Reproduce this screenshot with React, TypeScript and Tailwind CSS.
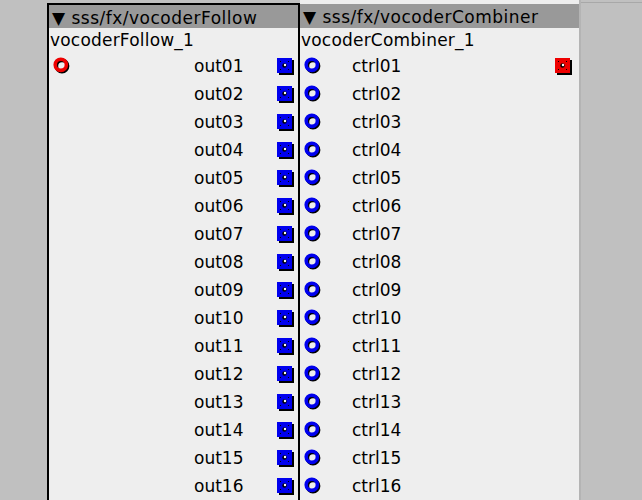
const outs = Array.from({ length: 16 }, (_, i) => String(i + 1).padStart(2, '0'));

function Ring({ color }: { color: string }) {
  return (
    <svg width="18" height="18" viewBox="0 0 18 18">
      <circle cx="9" cy="9" r="5.6" fill="none" stroke="#000" strokeWidth="3.6" />
      <circle cx="7.8" cy="7.8" r="5.6" fill="none" stroke={color} strokeWidth="3.6" />
    </svg>
  );
}

function Port({ color }: { color: string }) {
  return (
    <svg width="17" height="17" viewBox="0 0 17 17">
      <rect x="2" y="2" width="15" height="15" fill="#000" />
      <rect x="0" y="0" width="15" height="15" fill={color} />
      <rect x="3" y="3" width="1" height="1" fill="#000" />
      <rect x="11" y="3" width="1" height="1" fill="#000" />
      <rect x="3" y="11" width="1" height="1" fill="#000" />
      <rect x="11" y="11" width="1" height="1" fill="#000" />
      <circle cx="7.5" cy="7.5" r="2.2" fill="#000" />
      <circle cx="8" cy="7" r="1.2" fill="#fff" />
    </svg>
  );
}

export default function App() {
  return (
    <div
      className="flex w-[642px] h-[500px] overflow-hidden bg-[#c0c0c0] text-black text-[17px]"
      style={{ fontFamily: '"DejaVu Sans", sans-serif' }}
    >
      <div className="w-[47px] shrink-0" />

      {/* vocoderFollow */}
      <div className="w-[253px] shrink-0 mt-[3px] border-x-2 border-t-2 border-black bg-[#eeeeee]">
        <div className="h-[23px] bg-[#999999] flex items-center pl-[3px] pt-[3px] leading-none tracking-[0.5px]">
          ▼ sss/fx/vocoderFollow
        </div>
        <div className="h-[24px] flex items-center pl-px pt-px tracking-[0.2px]">vocoderFollow_1</div>
        {outs.map((n, i) => (
          <div key={n} className="h-[28px] flex items-center">
            <div className="w-[145px] pl-[4px] flex items-center">
              {i === 0 && <Ring color="#ee0000" />}
            </div>
            <div className="w-[83px] pt-px">out{n}</div>
            <div className="flex items-center">
              <Port color="#0000ee" />
            </div>
          </div>
        ))}
      </div>

      {/* vocoderCombiner */}
      <div className="w-[279px] shrink-0 bg-[#eeeeee]">
        <div className="h-[24px] mt-[4px] bg-[#999999] flex items-center pl-[3px] pt-[3px] leading-none tracking-[0.5px]">
          ▼ sss/fx/vocoderCombiner
        </div>
        <div className="h-[24px] flex items-center pl-px pt-px tracking-[0.2px]">vocoderCombiner_1</div>
        {outs.map((n, i) => (
          <div key={n} className="h-[28px] flex items-center">
            <div className="w-[52px] pl-[4px] flex items-center">
              <Ring color="#0000ee" />
            </div>
            <div className="flex-1 pt-px">ctrl{n}</div>
            <div className="w-[24px] flex items-center">
              {i === 0 && <Port color="#ee0000" />}
            </div>
          </div>
        ))}
      </div>

      <div className="w-[2px] shrink-0 bg-[#b4b4b4]" />
      <div className="flex-1 mt-[2px] border-t border-[#a8a8a8] bg-[#c0c0c0]" />
    </div>
  );
}
